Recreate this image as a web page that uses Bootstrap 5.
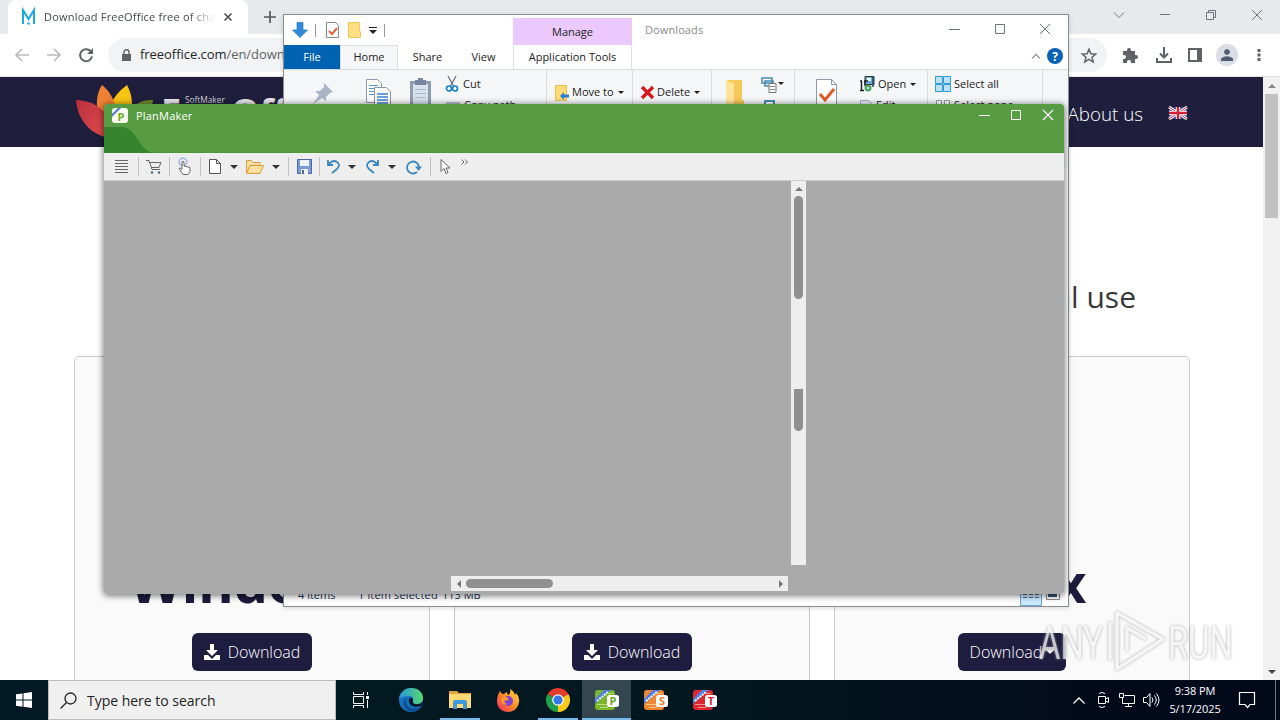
<!DOCTYPE html>
<html lang="en">
<head>
  <meta charset="UTF-8">
  <title>Desktop</title>
  <link href="https://cdn.jsdelivr.net/npm/bootstrap@5.3.0/dist/css/bootstrap.min.css" rel="stylesheet">
  <style>
    body { width: 1280px; height: 720px; overflow: hidden; background: #fff; font-family: "Open Sans", "Noto Sans", sans-serif; font-size: 11px; color: #222; }
    svg { display: block; flex: none; overflow: visible; }
    .ln { fill: none; stroke: currentColor; }
    .dim { stroke: #bbb; }
    .win { position: absolute; overflow: hidden; }
    .cell { flex: none; display: flex; align-items: center; justify-content: center; }

    /* cell widths */
    .c10 { width: 10px; } .c11 { width: 11px; } .c21 { width: 21px; } .c22 { width: 22px; }
    .c24 { width: 24px; } .c27 { width: 27px; } .c28 { width: 28px; } .c30 { width: 30px; }
    .c31 { width: 31px; } .c32 { width: 32px; } .c33 { width: 33px; } .c34 { width: 34px; }
    .c40 { width: 40px; } .c42 { width: 42px; } .c45 { width: 45px; } .c46 { width: 46px; }
    .c48 { width: 48px; } .c50 { width: 50px; }

    /* browser */
    .browser { left: 0; top: 0; width: 1280px; height: 680px; }
    .tab-strip { height: 34px; background: #e7eaed; }
    .tab-page { width: 240px; height: 34px; margin-left: 8px; background: #fff; border-radius: 8px 8px 0 0; padding-left: 13px; color: #45494d; }
    .tab-title { width: 171px; margin-left: 7px; font-size: 11px; letter-spacing: .2px; -webkit-mask-image: linear-gradient(90deg, #000 145px, transparent 171px); }
    .tab-x { margin-left: 9px; }
    .toolbar { height: 43px; border-bottom: 1px solid #e3e5e8; color: #5f6368; padding-left: 5px; }
    .omnibox { width: 999px; height: 34px; margin-left: 6px; border-radius: 17px; background: #f1f3f4; padding: 0 10px 0 14px; font-size: 13px; }
    .address { margin-left: 9px; letter-spacing: -.05px; }
    .avatar { width: 22px; height: 22px; border-radius: 50%; background: #dadce6; }
    .site { width: 1263px; height: 603px; overflow: hidden; }
    .site-nav { height: 70px; background: #1f1f3d; color: #fff; }
    .flower { margin: 8px 0 0 76px; }
    .logo-text { margin: 17px 0 0 7px; font-size: 36px; font-weight: 700; line-height: 1; color: #e8e8ec; }
    .logo-f { width: 24px; }
    .logo-small { width: 46px; margin-top: 1px; font-size: 8.3px; font-weight: 400; line-height: 10px; color: #d5d5df; }
    .about { margin: 23px 26px 0 0; font-size: 18.8px; font-weight: 300; }
    .flag { margin: 30px 76px 0 0; }
    .headline { height: 209px; padding: 130px 127px 0 0; font-size: 30px; line-height: 40px; color: #373737; text-align: right; }
    .os-list { padding-left: 74px; gap: 24px; }
    .os-box { width: 356px; height: 330px; background: #fafafa; border: 1px solid #ccc; border-radius: 5px; padding-top: 196px; }
    .os-name { height: 80px; line-height: 58px; font-size: 54px; font-weight: 700; color: #1d1b3b; }
    .btn-dl { height: 38px; padding: 0 12px; background: #1e1c3f; color: #fff; border: 0; border-radius: 6px; font-size: 16px; font-weight: 300; }
    .bar-v { width: 17px; background: #f1f1f1; }
    .bar-v .thumb { width: 13px; height: 124px; background: #c1c1c1; }

    /* file explorer */
    .explorer { left: 283px; top: 14px; width: 786px; height: 593px; background: #fff; border: 1px solid #8a8f94; box-shadow: 0 1px 5px rgba(0,0,0,.15); }
    .ex-head { height: 54px; }
    .ex-left { width: 229px; }
    .quick { height: 30px; padding-left: 8px; }
    .quick-check { margin-left: 10px; }
    .quick-folder { margin-left: 9px; }
    .vline { width: 1px; height: 13px; margin-left: 7px; background: #999; flex: none; }
    .ex-tab { height: 24px; display: flex; align-items: center; justify-content: center; flex: none; }
    .ex-file { width: 56px; background: #0063b1; color: #fff; }
    .ex-home { width: 58px; background: #f5f6f7; border: 1px solid #dadbdc; border-bottom: 0; }
    .ex-share { width: 59px; }
    .ex-view { width: 53px; }
    .ex-ctx { width: 119px; margin-top: 3px; }
    .ex-manage { height: 27px; background: #ebc9fc; padding-top: 1px; }
    .ex-name { margin: 7px 0 0 13px; color: #8a8a8a; letter-spacing: .1px; }
    .ex-controls { height: 28px; }
    .ex-help { height: 26px; }
    .ribbon { height: 100px; background: #f5f6f7; border-top: 1px solid #dadbdc; }
    .grp { height: 90px; border-right: 1px solid #dcdddf; flex: none; overflow: hidden; }
    .grp-clip { width: 263px; }
    .grp-move { width: 86px; height: 45px; padding-left: 8px; }
    .grp-delete { width: 79px; height: 45px; padding-left: 8px; }
    .grp-new { width: 83px; }
    .grp-open { width: 133px; }
    .grp-select { width: 115px; padding-left: 7px; }
    .i-pin { margin: 13px 0 0 28px; }
    .i-copy { margin: 9px 0 0 32px; }
    .i-paste { margin: 8px 0 0 19px; }
    .i-folder { margin: 10px 0 0 14px; }
    .i-easy { margin: 7px 0 0 17px; }
    .i-props { margin: 9px 0 0 21px; }
    .tri { width: 0; height: 0; border: 3px solid transparent; border-top-color: #222; border-bottom: 0; flex: none; }
    .tri-top { margin: 12px 0 0 1px; }
    .rows { line-height: 14px; }
    .rows-clip { margin-left: 15px; }
    .rows-open { margin-left: 22px; }
    .row-1 { height: 28px; }
    .label { margin: 0 4px 0 3px; }
    .ex-status { height: 23px; background: #fff; color: #1c3558; padding: 1px 0 0 14px; }
    .st-items { width: 60px; }
    .st-selected { width: 84px; letter-spacing: .15px; }
    .view-btn { width: 22px; height: 22px; border: 1px solid #66a7d8; background: #cce8ff; }
    .view-big { margin: 0 8px 0 4px; }

    /* spreadsheet window */
    .planmaker { left: 104px; top: 104px; width: 960px; height: 490px; background: #aaa; border-radius: 4px; }
    .pm-shadow { position: absolute; left: 104px; top: 104px; width: 960px; height: 490px; border-radius: 4px; box-shadow: 0 1px 6px 1px rgba(0,0,0,.5); }
    .pm-title { height: 49px; background: #579b42; border-bottom: 1px solid #4b9a37; color: #fff; position: relative; }
    .pm-swoosh { position: absolute; left: 0; top: 23px; }
    .pm-caption { height: 23px; position: relative; padding-left: 8px; }
    .pm-name { padding-top: 1px; letter-spacing: .2px; }
    .pm-tools { height: 28px; background: #eee; border-bottom: 1px solid #ccc; color: #666; }
    .pm-tools .cell { height: 27px; }
    .pm-tools .tri { border-width: 4px; border-top-color: #333; border-bottom: 0; }
    .sep { width: 1px; height: 19px; background: #c2c2c2; flex: none; }
    .sep-save { margin-left: 7px; }
    .more { margin: 0 0 9px 2px; }
    .pm-vbar { width: 15px; height: 384px; margin-left: 687px; background: #eee; }
    .pm-up { margin: 5px 0; }
    .pm-thumb { width: 9px; background: #909090; border-radius: 5px; }
    .pm-thumb-1 { height: 103px; }
    .pm-thumb-2 { height: 42px; margin-top: 90px; border-radius: 0 0 5px 5px; }
    .pm-hbar { width: 337px; height: 15px; margin: 11px 0 0 347px; padding: 0 5px 0 6px; background: #eee; }
    .pm-hbar .pm-thumb { width: 87px; height: 9px; margin-left: 5px; }

    /* watermark lies over page and button */
    .brand-mark { position: absolute; left: 1036px; top: 606px; opacity: .8; filter: drop-shadow(0 0 1.5px #999); }
    .brand-mark text { font-family: Roboto, sans-serif; font-size: 46px; fill: #f4f4f4; }

    /* taskbar */
    .taskbar { position: absolute; left: 0; top: 680px; width: 1280px; height: 40px; background: linear-gradient(90deg, #001922, #021820 55%, #030b1b 85%, #02091a); color: #fff; }
    .search-box { width: 288px; height: 40px; background: #f0f0f0; border: 1px solid #bbb; color: #222; font-size: 14px; padding-left: 11px; }
    .search-text { margin-left: 10px; padding-top: 1px; letter-spacing: -.02px; }
    .task { width: 49px; height: 40px; position: relative; }
    .task-open::after { content: ""; position: absolute; left: 5px; right: 4px; bottom: 0; height: 2px; background: #76b9ed; }
    .task-active { background: #34464f; }
    .task-active::after { left: 0; right: 0; }
    .clock { width: 64px; font-size: 11px; line-height: 18px; letter-spacing: -.1px; text-align: center; }
    .show-desktop { width: 5px; height: 40px; margin-left: 8px; }
  </style>
</head>
<body>

  <!-- browser -->
  <div class="win browser">
    <div class="tab-strip d-flex">
      <div class="tab-page d-flex align-items-center">
        <svg width="16" height="18" viewBox="0 0 16 18"><path d="M2 16V2l5.500 9L13 2v14" fill="none" stroke="#1ba7e8" stroke-width="2"/><circle cx="7.500" cy="15.500" r="1.200" fill="#1ba7e8"/></svg>
        <div class="tab-title text-nowrap overflow-hidden">Download FreeOffice free of cha</div>
        <svg class="tab-x" width="8" height="8" viewBox="0 0 8 8"><path class="ln" stroke-width="1.500" d="M.5.5l7 7M7.500.5l-7 7"/></svg>
      </div>
      <div class="cell ms-3"><svg width="12" height="12" viewBox="0 0 12 12"><path d="M6 0v12M0 6h12" stroke="#555" stroke-width="1.700"/></svg></div>
      <div class="ms-auto d-flex text-secondary pb-1">
        <div class="cell c46"><svg width="10" height="6"><path class="ln" d="M0 .5l5 5 5-5"/></svg></div>
        <div class="cell c46"><svg width="10" height="2"><path class="ln" d="M0 .5h10"/></svg></div>
        <div class="cell c46"><svg width="10" height="10"><path class="ln" d="M.5 2.500h7v7h-7zM2.500 2.500v-2h7v7h-2"/></svg></div>
        <div class="cell c46"><svg width="10" height="10"><path class="ln" d="M0 0l10 10M10 0L0 10"/></svg></div>
      </div>
    </div>
    <div class="toolbar d-flex align-items-center">
      <div class="cell c34"><svg width="14" height="14"><path class="ln dim" stroke-width="1.700" d="M14 7H1M7 1L1 7l6 6"/></svg></div>
      <div class="cell c30"><svg width="14" height="14"><path class="ln dim" stroke-width="1.700" d="M0 7h13M7 1l6 6-6 6"/></svg></div>
      <div class="cell c33"><svg width="14" height="14"><path class="ln" stroke-width="2" d="M11.600 3.200A6 6 0 1 0 13 8.400"/><path fill="currentColor" d="M14 0v6H8z"/></svg></div>
      <div class="omnibox d-flex align-items-center">
        <svg width="9" height="13"><path fill="#5f6368" d="M0 5h9v7H0z"/><path class="ln" stroke-width="1.400" d="M2 5.500V3.200a2.500 2.500 0 0 1 5 0v2.300"/></svg>
        <span class="address text-nowrap"><span class="text-dark">freeoffice.com</span>/en/down</span>
        <svg class="ms-auto" width="16" height="15" viewBox="0 0 16 15"><path class="ln" stroke-width="1.500" d="M8 1.200l1.900 4.500 4.800.4-3.700 3.100 1.200 4.700L8 11.400l-4.200 2.500L5 9.200 1.300 6.100l4.800-.4z"/></svg>
      </div>
      <div class="cell c46"><svg width="16" height="15" viewBox="0 0 16 15"><path fill="#5f6368" d="M1 3h4V2a2 2 0 0 1 4 0v1h4v4h1a2 2 0 0 1 0 4h-1v4H9v-1a2 2 0 0 0-4 0v1H1v-4h1a2 2 0 0 0 0-4H1z"/></svg></div>
      <div class="cell c21"><svg width="16" height="16"><path class="ln" stroke-width="2" d="M8 0v10M4 6.500l4 4 4-4M1 11v4h14v-4"/></svg></div>
      <div class="cell c42"><svg width="14" height="14"><path class="ln" stroke-width="2" d="M1 1h12v12H1z"/><path fill="#5f6368" d="M9 0h5v14H9z"/></svg></div>
      <div class="cell c22"><div class="avatar cell"><svg width="12" height="12"><circle cx="6" cy="3" r="2.800" fill="#4f5b70"/><path fill="#4f5b70" d="M0 12V9.500Q6 5 12 9.500V12z"/></svg></div></div>
      <div class="cell c42"><svg width="4" height="14"><path fill="#5f6368" d="M.5 1h3v3h-3zM.5 5.500h3v3h-3zM.5 10h3v3h-3z"/></svg></div>
    </div>
    <div class="d-flex">
      <div class="site">
        <div class="site-nav d-flex">
          <svg class="flower" width="78" height="54" viewBox="0 0 78 54">
            <defs><linearGradient id="red" x1="0" y1="0" x2="1" y2="1"><stop offset="0" stop-color="#b8303c"/><stop offset="1" stop-color="#e85050"/></linearGradient></defs>
            <path fill="#6f8c2c" d="M77 15Q50 14 40 51 74 45 77 15z"/>
            <path fill="#f7c412" d="M51 0Q26 18 34 48C54 44 62 20 51 0z"/>
            <path fill="#ee8034" d="M26 0C18 12 18 34 36 50 46 24 36 8 26 0z"/>
            <path fill="url(#red)" d="M0 15C2 40 20 52 38 54 36 28 22 16 0 15z"/>
          </svg>
          <div class="logo-text d-flex text-nowrap"><span class="logo-f">F</span><span class="logo-small">SoftMaker</span><span>Office</span></div>
          <div class="about ms-auto">About us</div>
          <svg class="flag" width="18" height="12" viewBox="0 0 18 12"><path fill="#28478f" d="M0 0h18v12H0z"/><path stroke="#fff" stroke-width="2.800" d="M0 0l18 12M18 0L0 12"/><path stroke="#d6203a" d="M0 0l18 12M18 0L0 12"/><path stroke="#fff" stroke-width="4.500" d="M9 0v12M0 6h18"/><path stroke="#d6203a" stroke-width="2.500" d="M9 0v12M0 6h18"/></svg>
        </div>
        <div class="headline">commercial use</div>
        <div class="os-list d-flex">
          <div class="os-box text-center flex-shrink-0"><div class="os-name">Windows</div>
            <a class="btn btn-dl d-inline-flex align-items-center gap-2"><svg width="16" height="16"><path fill="#fff" d="M6 0h4v6h4l-6 6-6-6h4zM0 11h4l4 4 4-4h4v5H0z"/></svg>Download</a></div>
          <div class="os-box text-center flex-shrink-0"><div class="os-name">Mac</div>
            <a class="btn btn-dl d-inline-flex align-items-center gap-2"><svg width="16" height="16"><path fill="#fff" d="M6 0h4v6h4l-6 6-6-6h4zM0 11h4l4 4 4-4h4v5H0z"/></svg>Download</a></div>
          <div class="os-box text-center flex-shrink-0"><div class="os-name">Linux</div>
            <a class="btn btn-dl dropdown-toggle d-inline-flex align-items-center">Download</a></div>
        </div>
      </div>
      <div class="bar-v d-flex flex-column align-items-center">
        <svg class="my-1" width="8" height="9"><path fill="#888" d="M4 3l4 4H0z"/></svg>
        <div class="thumb"></div>
        <svg class="mt-auto mb-1" width="8" height="9"><path fill="#444" d="M4 7l4-4H0z"/></svg>
      </div>
    </div>
  </div>

  <!-- file explorer -->
  <div class="win explorer d-flex flex-column">
    <div class="ex-head d-flex">
      <div class="ex-left">
        <div class="quick d-flex align-items-center">
          <svg width="16" height="16"><path fill="#2f8ad8" stroke="#2377bd" stroke-width=".7" d="M5 .5h6V8h4.500L8 15.500.500 8H5z"/></svg>
          <div class="vline"></div>
          <svg class="quick-check" width="13" height="16"><path fill="#fff" stroke="#888" d="M.5.5h9l3 3v12H.5z"/><path fill="none" stroke="#e2603a" stroke-width="2" d="M3 9l3 3 5-6"/></svg>
          <svg class="quick-folder" width="13" height="16"><path fill="#ffdf82" stroke="#edc860" d="M.5.5h11v9h1v6H.5z"/></svg>
          <svg class="ms-2" width="8" height="8"><path d="M0 1.500h8" stroke="#222"/><path d="M0 4h8L4 8z" fill="#222"/></svg>
          <div class="vline"></div>
        </div>
        <div class="d-flex">
          <div class="ex-tab ex-file">File</div>
          <div class="ex-tab ex-home">Home</div>
          <div class="ex-tab ex-share">Share</div>
          <div class="ex-tab ex-view">View</div>
        </div>
      </div>
      <div class="ex-ctx">
        <div class="ex-manage cell">Manage</div>
        <div class="ex-tab border-start border-end text-nowrap">Application Tools</div>
      </div>
      <div class="ex-name">Downloads</div>
      <div class="ms-auto">
        <div class="ex-controls d-flex text-secondary">
          <div class="cell c45"><svg width="11" height="2"><path class="ln" d="M0 1.500h11"/></svg></div>
          <div class="cell c45"><svg width="10" height="10"><path class="ln" d="M.5.5h9v9h-9z"/></svg></div>
          <div class="cell c46"><svg width="10" height="10"><path class="ln" d="M0 0l10 10M10 0L0 10"/></svg></div>
        </div>
        <div class="ex-help d-flex align-items-center justify-content-end">
          <svg class="me-2" width="8" height="5"><path fill="none" stroke="#999" stroke-width="1.400" d="M0 4.500l4-4 4 4"/></svg>
          <svg class="me-1" width="16" height="16"><circle cx="7" cy="8" r="8" fill="#0a62b8"/><text x="7" y="12.500" text-anchor="middle" font-size="12" font-weight="700" fill="#fff">?</text></svg>
        </div>
      </div>
    </div>
    <div class="ribbon d-flex">
      <div class="grp grp-clip d-flex">
        <svg class="i-pin" width="22" height="22"><path fill="#a9b5c5" d="M12 0l9 9-3 1-4 4 0 4-4-3L1 21l6-9-4-4h5l4-4z"/></svg>
        <svg class="i-copy" width="25" height="28"><path fill="#fff" stroke="#8d99a8" d="M.5.5h11l4 4v19H.5z"/><path stroke="#5a92cf" d="M3 6.500h9M3 9.500h9M3 12.500h9M3 15.500h9"/><path fill="#fff" stroke="#8d99a8" d="M8.500 8.500h12l4 4v18h-16z"/><path stroke="#3e80cc" stroke-width="1.300" d="M11 15h11M11 18h11M11 21h11M11 24h11"/></svg>
        <svg class="i-paste" width="21" height="30"><path fill="#8e9cb2" d="M0 3h21v27H0z"/><path fill="#d8e1ee" d="M3 6h15v24H3z"/><path fill="#77869e" d="M5 2h3V0h5v2h3v5H5z"/><path stroke="#aab9cc" d="M5 11.500h11M5 15.500h11M5 19.500h11"/></svg>
        <div class="rows rows-clip">
          <div class="row-1 d-flex align-items-center"><svg class="me-1" width="13" height="16"><path d="M2 0l6 11M10 0L4 11" stroke="#778" stroke-width="1.400"/><circle cx="3" cy="12.500" r="2.500" fill="none" stroke="#1b7fc8" stroke-width="1.700"/><circle cx="9" cy="12.500" r="2.500" fill="none" stroke="#1b7fc8" stroke-width="1.700"/></svg>Cut</div>
          <div class="d-flex"><svg class="me-1" width="14" height="13"><path fill="#aebed0" d="M0 4h14v9H0z"/></svg>Copy path</div>
        </div>
      </div>
      <div class="grp grp-move d-flex align-items-center"><svg width="14" height="16"><path fill="#ffdc74" stroke="#e5bd55" d="M.5.5h11v15H.5z"/><path fill="#2b7ecb" d="M5 11l4-4v2.500h5v3H9V15z"/></svg><span class="label text-nowrap">Move to</span><i class="tri"></i></div>
      <div class="grp grp-delete d-flex align-items-center"><svg width="13" height="13"><path stroke="#d9141c" stroke-width="3.200" d="M1 1l11 11M12 1L1 12"/></svg><span class="label">Delete</span><i class="tri"></i></div>
      <div class="grp grp-new d-flex">
        <svg class="i-folder" width="18" height="30"><path fill="#f5ca5a" d="M0 0h16v20h2v10H0z"/><path fill="#ffe398" d="M0 0l8 4v26H0z"/></svg>
        <svg class="i-easy" width="16" height="34"><path fill="#fff" stroke="#458bb5" stroke-width="1.500" d="M1 1h10v5H1zM4 4h8v5H4z"/><path fill="#fff" stroke="#777" d="M8 6.500h7v9H8z"/><path stroke="#888" d="M9 9.500h5M9 12.500h5"/><path fill="#fff" stroke="#458bb5" stroke-width="2" d="M4 24h9v10H4z"/></svg>
        <i class="tri tri-top"></i>
      </div>
      <div class="grp grp-open d-flex">
        <svg class="i-props" width="21" height="30"><path fill="#fff" stroke="#8d99a8" d="M.5.5h15l5 5v25H.5z"/><path stroke="#8d99a8" fill="none" d="M15.500.5v5h5"/><path fill="none" stroke="#e0592b" stroke-width="3" d="M4 15l5 6 9-11"/></svg>
        <div class="rows rows-open">
          <div class="row-1 d-flex align-items-center"><svg width="16" height="16"><path fill="#68a9d8" stroke="#333" d="M6 .5h9v8H6z"/><path fill="#fff" d="M8 2h4v3H8z"/><path fill="none" stroke="#222" stroke-width="1.500" d="M1 5h2M2.500 5v9M1 14.500h4M5 5h4M6 5v5"/><circle cx="9" cy="12" r="3.500" fill="#56a36a"/><circle cx="9" cy="12" r="1" fill="#fff"/><path d="M14 1v10" stroke="#246" stroke-width="1.500"/></svg><span class="label">Open</span><i class="tri"></i></div>
          <div class="d-flex"><svg width="13" height="13" class="me-1"><path fill="#eef" stroke="#9aabbd" d="M1.500 2.500h8l3 3V13h-11z"/></svg>Edit</div>
        </div>
      </div>
      <div class="grp grp-select rows">
        <div class="row-1 d-flex align-items-center text-nowrap"><svg width="16" height="16"><path fill="#b9e3fb" stroke="#369bd8" d="M.5.5h7v7h-7zM8.500.5h7v7h-7zM.5 8.500h7v7h-7zM8.500 8.500h7v7h-7z"/></svg><span class="label">Select all</span></div>
        <div class="d-flex text-nowrap"><svg width="16" height="13"><path fill="#fff" stroke="#999" d="M1.500 2.500h5v6h-5zM9.500 2.500h5v6h-5z"/></svg><span class="label">Select none</span></div>
      </div>
    </div>
    <div class="ex-status mt-auto d-flex align-items-center text-nowrap">
      <span class="st-items">4 items</span><span class="st-selected">1 item selected</span><span>113 MB</span>
      <div class="view-btn cell ms-auto"><svg width="16" height="12"><path stroke="#567" d="M0 2.500h4M6 2.500h4M12 2.500h4M0 5.500h4M6 5.500h4M12 5.500h4M0 8.500h4M6 8.500h4M12 8.500h4"/></svg></div>
      <svg class="view-big" width="14" height="14"><path fill="#fff" stroke="#888" d="M.5 1.500h13v10H.5z"/><path fill="#357" d="M2 3h9v6H2z"/></svg>
    </div>
  </div>

  <!-- PlanMaker -->
  <div class="pm-shadow"></div>
  <div class="win planmaker">
    <div class="pm-title">
      <svg class="pm-swoosh" width="60" height="26"><path fill="#37842f" d="M0 0h17C34 0 34 26 52 26H0z"/></svg>
      <div class="pm-caption d-flex align-items-center">
        <svg width="16" height="16"><rect width="16" height="15" rx="3" fill="#f8fff0"/><path fill="#4f79c8" d="M0 6l6-6h3L0 9z"/><text x="9" y="12.500" text-anchor="middle" font-size="11" font-weight="700" fill="#70ad28">P</text></svg>
        <span class="pm-name ms-2">PlanMaker</span>
        <div class="ms-auto d-flex">
          <div class="cell c32"><svg width="11" height="2"><path class="ln" d="M0 .5h11"/></svg></div>
          <div class="cell c32"><svg width="10" height="10"><path class="ln" d="M.5-.5h9v9h-9z"/></svg></div>
          <div class="cell c32"><svg width="10" height="10"><path class="ln" stroke-width="1.300" d="M0-1l10 10M10-1L0 9"/></svg></div>
        </div>
      </div>
    </div>
    <div class="pm-tools d-flex align-items-center">
      <div class="cell c34"><svg width="13" height="13"><path class="ln" d="M0 .5h13M0 3.500h13M0 6.500h13M0 9.500h13M0 12.500h13"/></svg></div><i class="sep"></i>
      <div class="cell c30"><svg width="16" height="14"><path class="ln" d="M0 .5h3l3 9h8M3.500 2.500H15l-2 5H5"/><circle cx="6" cy="12.500" r="1.200" fill="#467"/><circle cx="13" cy="12.500" r="1.200" fill="#467"/></svg></div><i class="sep"></i>
      <div class="cell c30"><svg width="14" height="17"><circle cx="5" cy="4" r="3.800" fill="none" stroke="#9bb7e8" stroke-width="1.500"/><path fill="#fff" stroke="#666" d="M4 10V4q1-1.500 2 0v4l6 1.500v4L10 16.500H5L1 10.500q1-1.500 3 1z"/></svg></div><i class="sep"></i>
      <div class="cell c28"><svg width="12" height="15"><path fill="#fff" stroke="#555" d="M.5.5h7l4 4v10H.5zM7.500.5v4h4"/></svg></div>
      <div class="cell c10"><i class="tri"></i></div>
      <div class="cell c32"><svg width="18" height="14"><path fill="#ffe0a0" stroke="#d99a3c" d="M.5 13V.5h5l1.500 2h7V5M.5 13.500L4 5.500h13.500l-3.500 8z"/></svg></div>
      <div class="cell c10"><i class="tri"></i></div>
      <i class="sep sep-save"></i>
      <div class="cell c30"><svg width="15" height="15"><path fill="#7d9ad6" stroke="#4a67a4" d="M.5.5h14v14H.5z"/><path fill="#eef2fa" d="M3 1h9v6H3zM4 10h7v5H4z"/><path fill="#4a67a4" d="M5 11h2v4H5z"/></svg></div><i class="sep"></i>
      <div class="cell c27"><svg width="13" height="15"><path fill="none" stroke="#3a86bf" stroke-width="1.800" d="M1 1v5h5M1.500 5.500Q6 0 10 3t0 7l-5 4"/></svg></div>
      <div class="cell c10"><i class="tri"></i></div>
      <div class="cell c30"><svg width="13" height="15"><path fill="none" stroke="#3a86bf" stroke-width="1.800" d="M12 1v5H7M11.500 5.500Q7 0 3 3t0 7l5 4"/></svg></div>
      <div class="cell c10"><i class="tri"></i></div>
      <div class="cell c33"><svg width="16" height="14"><path fill="none" stroke="#3a86bf" stroke-width="1.800" d="M11 12A6 6 0 1 1 13 7"/><path fill="#3a86bf" d="M9 6.500h7L12.500 11z"/></svg></div>
      <i class="sep"></i>
      <div class="cell c28"><svg width="11" height="15"><path fill="#fff" stroke="#666" d="M1 .5v12l3-3 2 5 2-1-2-4.500h4z"/></svg></div>
      <svg class="more" width="7" height="6"><path class="ln" d="M.5.5L3 3 .5 5.500M4 .5L6.500 3 4 5.500"/></svg>
    </div>
    <div class="pm-vbar d-flex flex-column align-items-center">
      <svg class="pm-up" width="8" height="5"><path fill="#777" d="M4 1l4 4H0z"/></svg>
      <div class="pm-thumb pm-thumb-1"></div>
      <div class="pm-thumb pm-thumb-2"></div>
    </div>
    <div class="pm-hbar d-flex align-items-center">
      <svg width="4" height="8"><path fill="#777" d="M4 0v8L0 4z"/></svg>
      <div class="pm-thumb"></div>
      <svg class="ms-auto" width="4" height="8"><path fill="#777" d="M0 0v8l4-4z"/></svg>
    </div>
  </div>

  <svg class="brand-mark" width="200" height="70">
    <text x="3" y="53" textLength="64" lengthAdjust="spacingAndGlyphs">ANY</text>
    <text x="132" y="53" textLength="65" lengthAdjust="spacingAndGlyphs">RUN</text>
    <path fill="none" stroke="#f4f4f4" stroke-width="3.500" stroke-linejoin="round" d="M81 49V7l46 26-46 30zM91 45V22l19 11M74 16v38"/>
  </svg>

  <!-- taskbar -->
  <div class="taskbar d-flex align-items-center">
    <div class="cell c48"><svg width="16" height="16"><path fill="#fff" d="M0 2.300L6.500 1.400V7.500H0zM7.500 1.200L16 0v7.500H7.500zM0 8.500h6.500v6.200L0 13.700zM7.500 8.500H16V16l-8.500-1.200z"/></svg></div>
    <div class="search-box d-flex align-items-center"><svg width="17" height="17"><circle class="ln" cx="10.500" cy="6.500" r="5.500" stroke-width="1.300"/><path class="ln" stroke-width="1.300" d="M6.500 10.500L.5 16.500"/></svg><span class="search-text">Type here to search</span></div>
    <div class="cell c50"><svg width="16" height="16"><path class="ln" d="M.5 0v2.500h10V0M.5 16v-2.500h10V16M.5 4.500h10v7H.5zM14.500 0v3M14.500 8v8"/><path fill="#fff" d="M13 4h3v3h-3z"/></svg></div>
    <div class="cell task"><svg width="24" height="24" viewBox="0 0 24 24"><defs><linearGradient id="edge" x1="0" x2="1"><stop offset="0" stop-color="#2598dc"/><stop offset="1" stop-color="#5bd773"/></linearGradient></defs><circle cx="12" cy="12" r="12" fill="#1672c0"/><path fill="url(#edge)" d="M0 11C1 4 6 0 12 0c8 0 12 5 12 10 0 4-3 6-7 6-3 0-4-1-3-3 1-3-1-5-4-5-4 0-8 1-10 3z"/><path fill="#0d4d91" d="M8 10c-3 6 2 13 12 10 1 0 2-1 2-1-3 5-9 6-14 3-5-4-4-10 0-12z"/><path fill="#04182a" d="M10 11q4-3 4 1-1 3 2 4c4 1 7-1 8-3 0 3-2 6-6 6-5 0-9-3-8-8z"/></svg></div>
    <div class="cell task task-open"><svg width="22" height="20"><path fill="#e2a33a" d="M0 1h8l2 2h12v15H0z"/><path fill="#ffda74" d="M0 4h22v14H0z"/><path fill="#3e9ad8" d="M4 12q0-2 2-2h10q2 0 2 2v7h-4v-5H8v5H4z"/></svg></div>
    <div class="cell task"><svg width="23" height="23"><defs><linearGradient id="fox" x1="1" y1="0" x2="0" y2="1"><stop offset="0" stop-color="#ffe14a"/><stop offset=".5" stop-color="#ff8a24"/><stop offset="1" stop-color="#f0246c"/></linearGradient></defs><path fill="url(#fox)" d="M3 2q1 3 4 3 2-2 3-2 0 2 1 3 3-1 2-6 4 2 5 6l1-2q4 4 3 9c-1 6-5 10-11 10S0 19 0 12c0-4 1-7 3-10z"/><circle cx="11" cy="12" r="5" fill="#8242d4"/><path fill="#ff9a2c" d="M5 8q4-1 7 2-2 2-5 2 1 3 4 3-5 2-7-3z"/></svg></div>
    <div class="cell task task-open"><svg width="24" height="24" viewBox="0 0 24 24"><path fill="#e33b2e" d="M12 12L1.600 6A12 12 0 0 1 22.400 6z"/><path fill="#fdc918" d="M12 12L22.400 6A12 12 0 0 1 12 24z"/><path fill="#229f48" d="M12 12V24A12 12 0 0 1 1.600 6z"/><path fill="#e33b2e" d="M12 6h10.400v1H12z"/><circle cx="12" cy="12" r="5.800" fill="#fff"/><circle cx="12" cy="12" r="4.600" fill="#3377e8"/></svg></div>
    <div class="cell task task-open task-active"><svg width="24" height="21"><rect width="20" height="20" rx="3" fill="#7ab52c"/><path fill="#4f7ee0" d="M0 9l9-9h7L0 14z"/><path stroke="#fff" stroke-dasharray="2 1" stroke-width="2" d="M2 11L13 2"/><path stroke="#bce077" d="M2 14.500h10M5 17.500h8M12 3.500h6"/><rect x="12" y="5" width="12" height="12" rx="2.500" fill="#fff"/><text x="18" y="15" text-anchor="middle" font-size="11" font-weight="700" fill="#69a323">P</text></svg></div>
    <div class="cell task"><svg width="24" height="21"><rect width="20" height="20" rx="3" fill="#ee8733"/><path fill="#4f7ee0" d="M0 9l9-9h7L0 14z"/><path stroke="#fff" stroke-dasharray="2 1" stroke-width="2" d="M2 11L13 2"/><path stroke="#ffc28b" d="M2 14.500h10M5 17.500h8M12 3.500h6"/><rect x="12" y="5" width="12" height="12" rx="2.500" fill="#fff"/><text x="18" y="15" text-anchor="middle" font-size="11" font-weight="700" fill="#e97825">S</text></svg></div>
    <div class="cell task"><svg width="24" height="21"><rect width="20" height="20" rx="3" fill="#dc2730"/><path fill="#4f7ee0" d="M0 9l9-9h7L0 14z"/><path stroke="#fff" stroke-dasharray="2 1" stroke-width="2" d="M2 11L13 2"/><path stroke="#f59090" d="M2 14.500h10M5 17.500h8M12 3.500h6"/><rect x="12" y="5" width="12" height="12" rx="2.500" fill="#fff"/><text x="18" y="15" text-anchor="middle" font-size="11" font-weight="700" fill="#d71820">T</text></svg></div>
    <div class="d-flex ms-auto align-items-center">
      <div class="cell c24"><svg width="12" height="7"><path class="ln" stroke-width="1.300" d="M.5 6.500L6 1l5.500 5.500"/></svg></div>
      <div class="cell c24"><svg width="12" height="16"><path class="ln" d="M1.500 4.500h7v7h-7zM8.500 7l3-1.500v5L8.500 9M2 1.500q3-2 6 0M2 14.500q3 2 6 0"/></svg></div>
      <div class="cell c24"><svg width="16" height="14"><path class="ln" d="M5.500 2.500h10v8H3.500V5M6 13.500h7M9.500 10.500v3M.5.5h4v4h-4z"/></svg></div>
      <div class="cell c24"><svg width="17" height="14"><path class="ln" d="M.5 4.500h3l3.500-4v13l-3.500-4h-3zM9 4.500q2 2.500 0 5M11.500 2.500q3.500 4.500 0 9M13.500.5q5 6.500 0 13"/></svg></div>
      <div class="clock">9:38 PM<br>5/17/2025</div>
      <div class="cell c40"><svg width="16" height="16"><path class="ln" stroke-width="1.200" d="M.5.5h15v12H11L8.500 15.500 6 12.500H.5z"/></svg></div>
      <div class="show-desktop border-start border-secondary"></div>
    </div>
  </div>

  <script src="https://cdn.jsdelivr.net/npm/bootstrap@5.3.0/dist/js/bootstrap.bundle.min.js"></script>
</body>
</html>
